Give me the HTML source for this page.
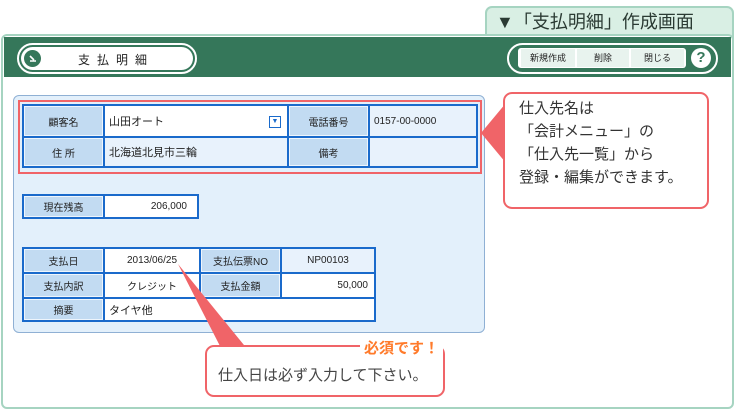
<!DOCTYPE html>
<html><head><meta charset="utf-8"><style>
*{margin:0;padding:0;box-sizing:border-box}
body{width:735px;height:410px;background:#fff;position:relative;overflow:hidden;font-family:"Liberation Sans","Noto Sans CJK JP",sans-serif;color:#222}
.a{position:absolute}
.c{position:absolute;display:flex;align-items:center;font-size:10px;border:2px solid #1a6acb}
.l{background:#c2dbf2;justify-content:center;box-shadow:inset 0 0 0 1px #eef5fc}
.v{background:#fff;padding:0 4px}
.lb{background:#e8f2fc}
</style></head><body>
<div class="a" style="left:485px;top:6px;width:249px;height:34px;background:#d9efe4;border:2px solid #a6d4c1;border-radius:7px 7px 0 0"></div>
<div class="a" style="left:496px;top:8px;font-size:18px;color:#2a3a33;white-space:nowrap">▼「支払明細」作成画面</div>
<div class="a" style="left:1px;top:34px;width:733px;height:375px;border:2px solid #a6d4c1;border-radius:6px;background:#fff"></div>
<div class="a" style="left:4px;top:37px;width:727px;height:40px;background:#35775a"></div>
<div class="a" style="left:17px;top:43px;width:180px;height:31px;border:2px solid #fff;border-radius:16px"></div>
<div class="a" style="left:21px;top:47px;width:172px;height:23px;background:#fff;border-radius:12px"></div>
<div class="a" style="left:24px;top:50px;width:17px;height:17px;border-radius:50%;background:#35775a"></div>
<svg class="a" style="left:24px;top:50px" width="17" height="17"><path d="M6 6 L10 10 M6 11 H12" stroke="#fff" stroke-width="1.6" fill="none"/></svg>
<div class="a" style="left:78px;top:51px;font-size:12px;letter-spacing:7px">支払明細</div>
<div class="a" style="left:507px;top:43px;width:211px;height:31px;border:2px solid #fff;border-radius:16px"></div>
<div class="a" style="left:518px;top:48px;width:168px;height:20px;background:#fff;border-radius:3px"></div>
<div class="a" style="left:521px;top:49px;width:54px;height:18px;background:#e8f3ee;font-size:9px;text-align:center;line-height:18px">新規作成</div>
<div class="a" style="left:577px;top:49px;width:52px;height:18px;background:#e8f3ee;font-size:9px;text-align:center;line-height:18px">削除</div>
<div class="a" style="left:631px;top:49px;width:53px;height:18px;background:#e8f3ee;font-size:9px;text-align:center;line-height:18px">閉じる</div>
<div class="a" style="left:691px;top:48px;width:20px;height:20px;border-radius:50%;background:#fff;color:#35775a;font-weight:bold;font-size:15px;text-align:center;line-height:20px">?</div>

<div class="a" style="left:13px;top:95px;width:472px;height:238px;background:#e3f0fb;border:1px solid #8fb0d4;border-radius:6px"></div>
<div class="a" style="left:18px;top:100px;width:464px;height:74px;border:2px solid #f06468"></div>

<div class="c l" style="left:22px;top:104px;width:83px;height:34px">顧客名</div>
<div class="c v" style="left:103px;top:104px;width:186px;height:34px;font-size:11px">山田オート<span style="position:absolute;right:6px;top:10px;width:12px;height:12px;border:1px solid #1a6acb;font-size:7px;text-align:center;line-height:10px;color:#1a6acb">▼</span></div>
<div class="c l" style="left:287px;top:104px;width:83px;height:34px">電話番号</div>
<div class="c v lb" style="left:368px;top:104px;width:110px;height:34px">0157-00-0000</div>
<div class="c l" style="left:22px;top:136px;width:83px;height:32px">住 所</div>
<div class="c v lb" style="left:103px;top:136px;width:186px;height:32px;font-size:11px">北海道北見市三輪</div>
<div class="c l" style="left:287px;top:136px;width:83px;height:32px">備考</div>
<div class="c v lb" style="left:368px;top:136px;width:110px;height:32px"></div>

<div class="c l" style="left:22px;top:194px;width:83px;height:25px">現在残高</div>
<div class="c v" style="left:103px;top:194px;width:96px;height:25px;justify-content:flex-end;padding-right:10px">206,000</div>

<div class="c l" style="left:22px;top:247px;width:83px;height:27px">支払日</div>
<div class="c v" style="left:103px;top:247px;width:98px;height:27px;justify-content:center">2013/06/25</div>
<div class="c l" style="left:199px;top:247px;width:83px;height:27px">支払伝票NO</div>
<div class="c v lb" style="left:280px;top:247px;width:96px;height:27px;justify-content:center">NP00103</div>
<div class="c l" style="left:22px;top:272px;width:83px;height:27px">支払内訳</div>
<div class="c v" style="left:103px;top:272px;width:98px;height:27px;justify-content:center">クレジット</div>
<div class="c l" style="left:199px;top:272px;width:83px;height:27px">支払金額</div>
<div class="c v" style="left:280px;top:272px;width:96px;height:27px;justify-content:flex-end;padding-right:6px">50,000</div>
<div class="c l" style="left:22px;top:297px;width:83px;height:25px">摘要</div>
<div class="c v" style="left:103px;top:297px;width:273px;height:25px;font-size:11px">タイヤ他</div>

<svg class="a" style="left:0;top:0" width="735" height="410">
<path d="M178 264 L248 350 L222 350 Z" fill="#f06468"/>
<path d="M481 133 L506 103 L506 163 Z" fill="#f06468"/>
</svg>
<div class="a" style="left:503px;top:92px;width:206px;height:117px;background:#fff;border:2px solid #f06468;border-radius:9px"></div>
<div class="a" style="left:519px;top:97px;font-size:15px;line-height:23px;color:#333;white-space:nowrap">仕入先名は<br>「会計メニュー」の<br>「仕入先一覧」から<br>登録・編集ができます。</div>
<div class="a" style="left:205px;top:345px;width:240px;height:52px;background:#fff;border:2px solid #f06468;border-radius:9px"></div>
<div class="a" style="left:360px;top:337px;padding:0 4px;background:#fff;font-size:15px;font-weight:bold;color:#ff7a2a;white-space:nowrap">必須です！</div>
<div class="a" style="left:218px;top:364px;font-size:15px;color:#444;white-space:nowrap">仕入日は必ず入力して下さい。</div>
</body></html>
